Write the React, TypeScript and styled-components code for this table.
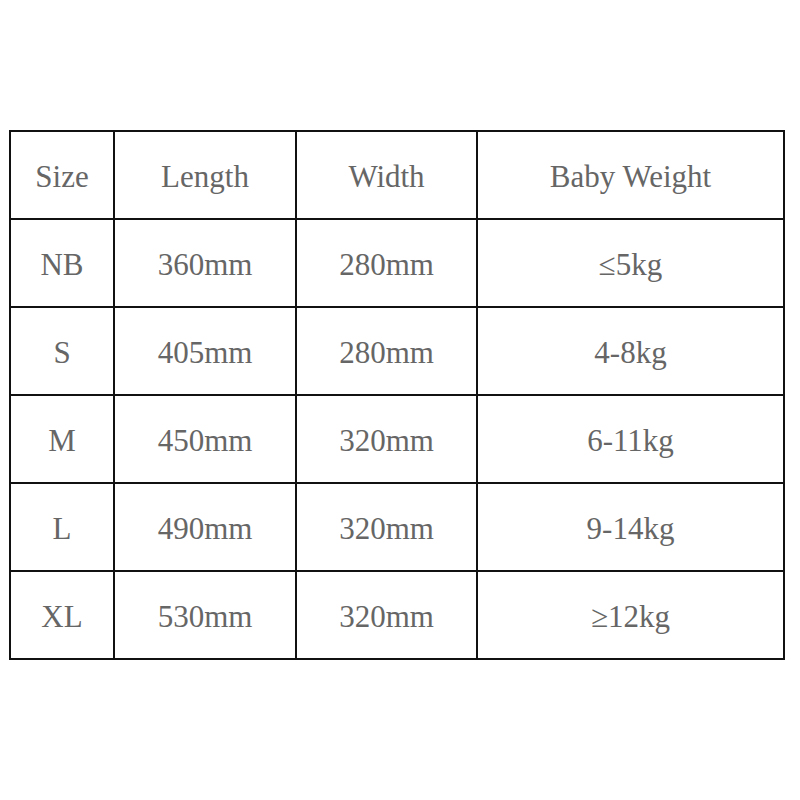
import React from "react";
import styled, { createGlobalStyle } from "styled-components";

const Global = createGlobalStyle`
  html, body { margin: 0; padding: 0; background: #fff; }
  body { font-family: "Liberation Serif", "Times New Roman", serif; }
`;

const Page = styled.div`
  width: 800px;
  height: 800px;
  padding: 130px 0 0 9px;
  box-sizing: border-box;
`;

const Grid = styled.div`
  display: grid;
  grid-template-columns: 104px 182px 181px 307px;
  grid-auto-rows: 88px;
  width: max-content;
  border-top: 2px solid #111;
  border-left: 2px solid #111;
`;

const Cell = styled.div`
  display: flex;
  align-items: center;
  justify-content: center;
  box-sizing: border-box;
  border-right: 2px solid #111;
  border-bottom: 2px solid #111;
  font-family: "Liberation Serif", "Times New Roman", serif;
  font-size: 31px;
  color: #666;
  padding-top: 3px;
`;

const rows: string[][] = [
  ["Size", "Length", "Width", "Baby Weight"],
  ["NB", "360mm", "280mm", "≤5kg"],
  ["S", "405mm", "280mm", "4-8kg"],
  ["M", "450mm", "320mm", "6-11kg"],
  ["L", "490mm", "320mm", "9-14kg"],
  ["XL", "530mm", "320mm", "≥12kg"],
];

export default function App() {
  return (
    <>
      <Global />
      <Page>
        <Grid>
          {rows.map((r, i) =>
            r.map((c, j) => <Cell key={`${i}-${j}`}>{c}</Cell>)
          )}
        </Grid>
      </Page>
    </>
  );
}
